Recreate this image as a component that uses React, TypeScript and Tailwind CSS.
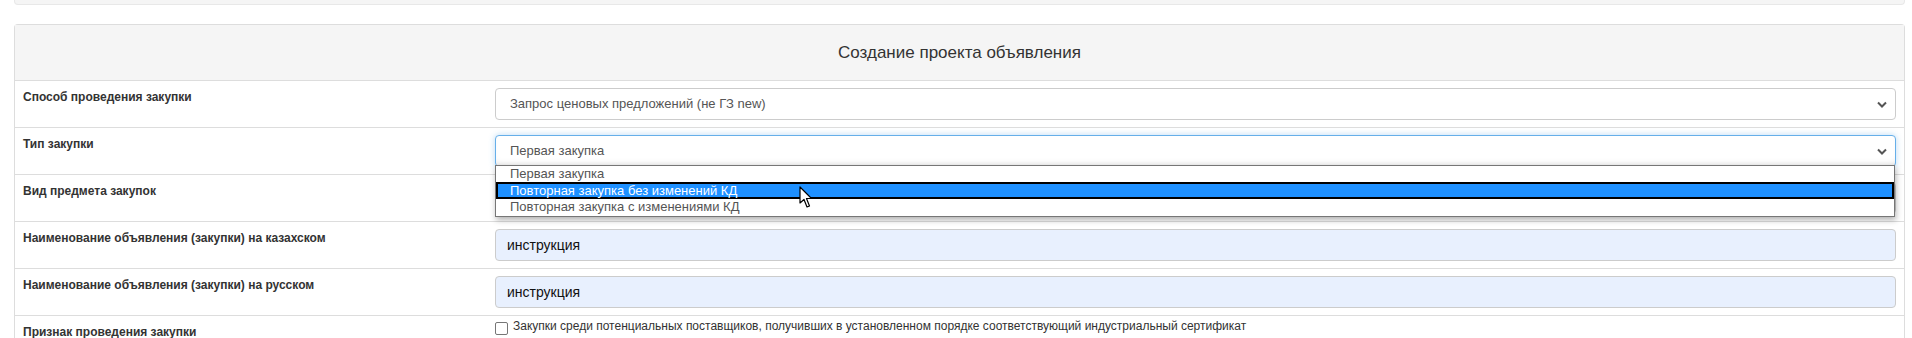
import React from "react";

const rows = [
  { label: "Способ проведения закупки", kind: "select", value: "Запрос ценовых предложений (не ГЗ new)" },
  { label: "Тип закупки", kind: "select-open", value: "Первая закупка" },
  { label: "Вид предмета закупок", kind: "select", value: "" },
  { label: "Наименование объявления (закупки) на казахском", kind: "input", value: "инструкция" },
  { label: "Наименование объявления (закупки) на русском", kind: "input", value: "инструкция" },
];

const options = ["Первая закупка", "Повторная закупка без изменений КД", "Повторная закупка с изменениями КД"];

function Chevron() {
  return (
    <svg width="10" height="7" viewBox="0 0 10 7" className="shrink-0">
      <polyline points="1,1.5 5,5.5 9,1.5" fill="none" stroke="#555" strokeWidth="2" />
    </svg>
  );
}

function Select({ value, focused }: { value: string; focused?: boolean }) {
  return (
    <div
      className={
        focused
          ? "flex h-[32px] items-center justify-between rounded-[4px] border border-[#66afe9] bg-white pl-[14px] pr-[8px] text-[13px] text-[#555] shadow-[inset_0_-6px_8px_-6px_rgba(0,0,0,0.15),0_0_6px_rgba(102,175,233,0.45)]"
          : "flex h-[32px] items-center justify-between rounded-[4px] border border-[#ccc] bg-white pl-[14px] pr-[8px] text-[13px] text-[#555]"
      }
    >
      <span>{value}</span>
      <Chevron />
    </div>
  );
}

function Dropdown() {
  return (
    <div className="absolute left-0 right-[9px] top-[37px] z-10 border border-[#767676] bg-white text-[13px] leading-[16px] shadow-[1px_3px_6px_rgba(0,0,0,0.3)]">
      <div className="h-[16px] pl-[14px] text-[#555]">{options[0]}</div>
      <div className="h-[17px] border-2 border-black bg-[#1e90ff] pl-[12px] leading-[13px] text-white">{options[1]}</div>
      <div className="h-[17px] pl-[14px] text-[#555]">{options[2]}</div>
    </div>
  );
}

function Cursor() {
  return (
    <svg className="absolute left-[799px] top-[186px] z-20" width="16" height="24" viewBox="0 0 16 24">
      <path d="M1 1 L1 17 L5 13.5 L8 21 L10.5 20 L7.5 12.5 L12.5 12.5 Z" fill="#fff" stroke="#000" strokeWidth="1.2" strokeLinejoin="round" />
    </svg>
  );
}

export default function App() {
  return (
    <div className="relative h-[338px] w-[1912px] overflow-hidden bg-white font-['Liberation_Sans',Arial,sans-serif] text-[#333]">
      <div className="ml-[14px] mr-[7px] h-[5px] rounded-b-[4px] border border-t-0 border-[#e8e8e8] bg-[#f5f5f5]" />

      <div className="ml-[14px] mr-[7px] mt-[19px] rounded-t-[4px] border border-b-0 border-[#ddd]">
        <div className="flex h-[56px] items-center justify-center border-b border-[#ddd] bg-[#f5f5f5] text-[17px] text-[#333]">
          Создание проекта объявления
        </div>

        {rows.map((r, i) => (
          <div key={i} className="flex h-[47px] border-b border-[#ddd]">
            <div className="w-[480px] shrink-0 pl-[8px] pt-[8px] text-[12px] font-bold leading-[17px] text-[#333]">
              {r.label}
            </div>
            <div className="relative flex-1 pr-[8px] pt-[7px]">
              {r.kind === "input" ? (
                <div className="flex h-[32px] items-center rounded-[4px] border border-[#ccc] bg-[#e8f0fe] pl-[11px] text-[14px] text-[#111]">
                  {r.value}
                </div>
              ) : (
                <Select value={r.value} focused={r.kind === "select-open"} />
              )}
              {r.kind === "select-open" && <Dropdown />}
            </div>
          </div>
        ))}

        <div className="flex h-[47px]">
          <div className="w-[480px] shrink-0 pl-[8px] pt-[8px] text-[12px] font-bold leading-[17px] text-[#333]">
            Признак проведения закупки
          </div>
          <div className="flex flex-1 items-start gap-[5px] pr-[8px] pt-[2px]">
            <div className="mt-[4px] h-[13px] w-[13px] shrink-0 rounded-[2px] border border-[#767676] bg-white" />
            <span className="text-[12px] leading-[17px] text-[#333]">
              Закупки среди потенциальных поставщиков, получивших в установленном порядке соответствующий индустриальный сертификат
            </span>
          </div>
        </div>
      </div>

      <Cursor />
    </div>
  );
}
